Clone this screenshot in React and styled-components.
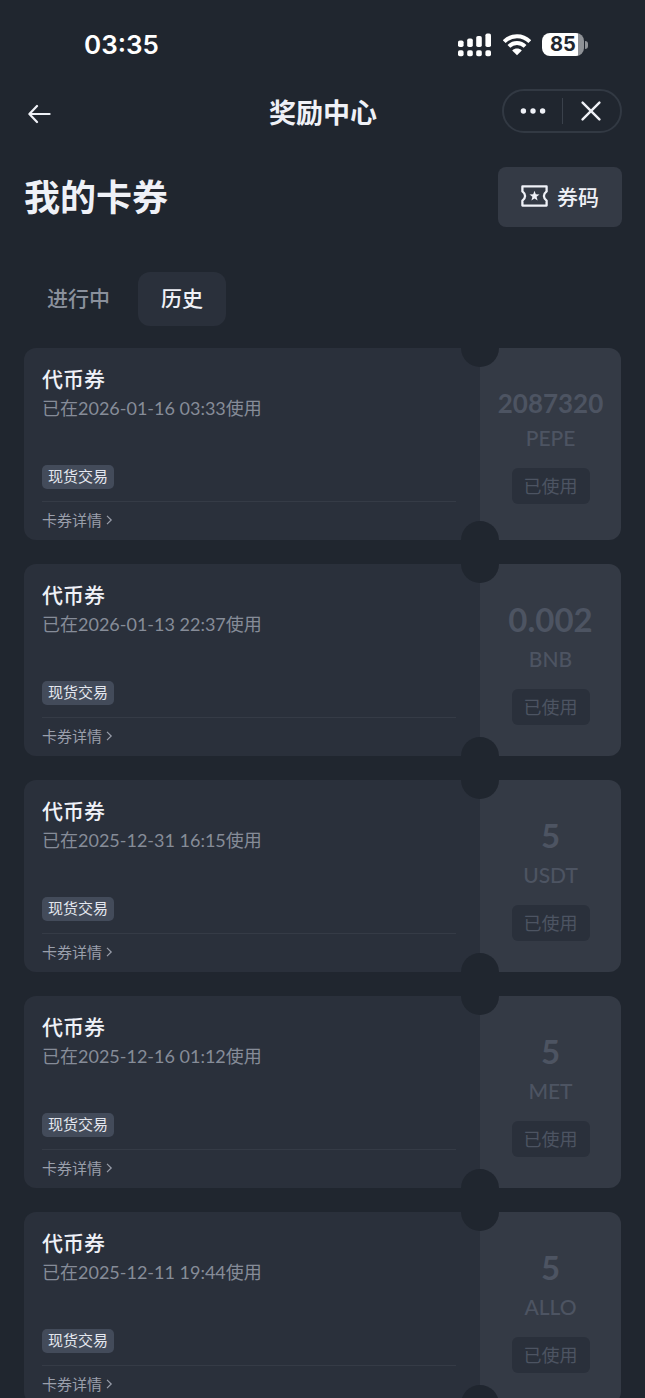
import React, { useState } from 'react';
import styled, { createGlobalStyle } from 'styled-components';

const GlobalStyle = createGlobalStyle`
  * {
    box-sizing: border-box;
  }
  body {
    margin: 0;
    background: #20262f;
    color: #eff1f7;
    font-family: Lato, "Noto Sans CJK SC", sans-serif;
  }
  button {
    border: 0;
    padding: 0;
    background: none;
    color: inherit;
    font: inherit;
    cursor: pointer;
  }
  svg {
    display: block;
  }
`

const Screen = styled.div`
  display: flex;
  flex-direction: column;
  height: 100vh;
  overflow: hidden;
`;

const StatusBar = styled.div`
  display: flex;
  flex: none;
  align-items: center;
  justify-content: space-between;
  height: 89px;
  padding: 0 57px 0 84px;
  color: #fff;
  font-family: Inter, sans-serif;
`;

const Time = styled.time`
  font-size: 26px;
  font-weight: 600;
`;

const StatusIcons = styled.div`
  display: flex;
  align-items: center;
  gap: 11px;
`;

const Battery = styled.div`
  display: flex;
  align-items: center;
  gap: 1px;
`;

const BatteryLevel = styled.div`
  width: 42px;
  border-radius: 8px;
  background: linear-gradient(to right, #fff 85%, #8f9297 85%);
  color: #20262f;
  font-size: 20px;
  font-weight: 700;
  line-height: 23px;
  text-align: center;
`;

const BatteryTip = styled.div`
  width: 3px;
  height: 8px;
  border-radius: 0 4px 4px 0;
  background: #8f9297;
`;

const NavBar = styled.header`
  display: grid;
  flex: none;
  grid-template-columns: 1fr auto 1fr;
  align-items: start;
  padding: 0 23px 0 24px;
`;

const BackButton = styled.button`
  justify-self: start;
  padding: 15px 4px 9px;
`;

const NavTitle = styled.h1`
  margin: 0;
  font-size: 27px;
  font-weight: 700;
  line-height: 48px;
`;

const Capsule = styled.div`
  display: flex;
  justify-self: end;
  align-items: center;
  width: 120px;
  height: 44px;
  border: 2px solid #323943;
  border-radius: 22px;
`;

const CapsuleButton = styled.button`
  display: flex;
  flex: 1;
  align-items: center;
  justify-content: center;
  height: 26px;

  & + & {
    border-left: 1px solid #3a414b;
  }
`;

const Heading = styled.div`
  display: flex;
  flex: none;
  align-items: center;
  justify-content: space-between;
  padding: 30px 23px 0 24px;
`;

const PageTitle = styled.h2`
  margin: 0;
  font-size: 36px;
  font-weight: 700;
  line-height: 58px;
`;

const CodeButton = styled.button`
  display: flex;
  align-items: center;
  gap: 9px;
  height: 60px;
  padding: 0 23px 2px;
  border-radius: 8px;
  background: #343a45;
  font-size: 21px;
  font-weight: 500;
`;

const Tabs = styled.div`
  display: flex;
  flex: none;
  gap: 5px;
  padding: 45px 24px 22px;
`;

const Tab = styled.button`
  height: 54px;
  padding: 0 23px 4px;
  border-radius: 12px;
  background: ${props => props.$active ? '#2a303b' : 'transparent'};
  color: ${props => props.$active ? '#eff1f7' : '#8a909c'};
  font-size: 21px;
  font-weight: 500;
`;

const CouponList = styled.ul`
  display: flex;
  flex: 1;
  flex-direction: column;
  gap: 24px;
  min-height: 0;
  margin: 0;
  padding: 0 24px;
  overflow-y: auto;
  list-style: none;
  scrollbar-width: none;
`;

const Card = styled.li`
  position: relative;
  display: flex;
  flex: none;
  min-height: 192px;

  /* round notches on the tear line */
  &::before,
  &::after {
    content: '';
    position: absolute;
    right: 122px;
    width: 38px;
    height: 19px;
    background: #20262f;
  }
  &::before {
    top: 0;
    border-radius: 0 0 19px 19px;
  }
  &::after {
    bottom: 0;
    border-radius: 19px 19px 0 0;
  }
`;

const CardBody = styled.div`
  display: flex;
  flex: 1;
  flex-direction: column;
  align-items: flex-start;
  padding: 16px 24px 0 18px;
  border-radius: 12px 0 0 12px;
  background: #2a303b;
`;

const CardTitle = styled.h3`
  margin: 0;
  font-size: 21px;
  font-weight: 500;
  line-height: 30px;
`;

const CardDate = styled.p`
  margin: 0;
  color: #868c98;
  font-size: 18px;
  line-height: 28px;
`;

const Tag = styled.span`
  margin-top: auto;
  padding: 0 6px 2px;
  border-radius: 5px;
  background: #434b5a;
  color: #e4e7ee;
  font-size: 15px;
  line-height: 22px;
`;

const CardFooter = styled.div`
  align-self: stretch;
  margin-top: 12px;
  padding-bottom: 2px;
  border-top: 1px solid #353b46;
`;

const DetailLink = styled.a`
  display: flex;
  align-items: center;
  gap: 4px;
  width: fit-content;
  color: #9a9fab;
  font-size: 15px;
  line-height: 36px;
  text-decoration: none;
`;

const CardSide = styled.div`
  display: flex;
  flex: none;
  flex-direction: column;
  align-items: center;
  justify-content: center;
  width: 141px;
  border-radius: 0 12px 12px 0;
  background: #343a45;
  color: #4d5462;
`;

const Amount = styled.strong`
  font-size: ${props => props.$long ? '26px' : '33px'};
  font-weight: 700;
  line-height: ${props => props.$long ? '38px' : '48px'};
`;

const Token = styled.span`
  font-size: 21px;
  font-weight: 500;
  line-height: 32px;
`;

const Used = styled.span`
  margin-top: 14px;
  padding: 0 12px;
  border-radius: 6px;
  background: #2a303b;
  font-size: 18px;
  line-height: 36px;
`;

const SignalIcon = () => (
  <svg width="34" height="24" viewBox="0 0 34 24" fill="#fff">
    <rect x="0" y="7.5" width="5.6" height="6.5" rx="1.8" />
    <rect x="9.2" y="5.5" width="5.6" height="8.5" rx="1.8" />
    <rect x="18.2" y="3" width="5.6" height="11" rx="1.8" />
    <rect x="27.4" y="0.5" width="5.6" height="13.5" rx="1.8" />
    <rect x="0" y="17.2" width="5.6" height="6" rx="1.8" />
    <rect x="9.2" y="17.2" width="5.6" height="6" rx="1.8" />
    <rect x="18.2" y="17.2" width="5.6" height="6" rx="1.8" />
    <rect x="27.4" y="17.2" width="5.6" height="6" rx="1.8" />
  </svg>
);

const WifiIcon = () => (
  <svg width="28" height="22" viewBox="0 0 28 22" fill="none" stroke="#fff" strokeWidth="4">
    <path d="M1.2 7.6C8.4 .4 19.6 .4 26.8 7.6" />
    <path d="M5.9 12.4C10.5 8 17.5 8 22.1 12.4" />
    <path d="M14 21.3L9.2 16.5C12 13.9 16 13.9 18.8 16.5Z" fill="#fff" stroke="none" />
  </svg>
);

const BackIcon = () => (
  <svg width="24" height="20" viewBox="0 0 24 20" fill="none" stroke="currentColor" strokeWidth="2.2" strokeLinecap="round" strokeLinejoin="round">
    <path d="M9 2L1.4 10L9 18M1.8 10H21.6" />
  </svg>
);

const MoreIcon = () => (
  <svg width="26" height="8" viewBox="0 0 26 8" fill="currentColor">
    <circle cx="3.4" cy="4" r="2.7" />
    <circle cx="13" cy="4" r="2.7" />
    <circle cx="22.6" cy="4" r="2.7" />
  </svg>
);

const CloseIcon = () => (
  <svg width="20" height="20" viewBox="0 0 20 20" fill="none" stroke="currentColor" strokeWidth="2.4" strokeLinecap="round">
    <path d="M1.6 1.6L18.4 18.4M18.4 1.6L1.6 18.4" />
  </svg>
);

const TicketIcon = () => (
  <svg width="27" height="22" viewBox="0 0 27 22" fill="none" stroke="currentColor" strokeWidth="2.3" strokeLinejoin="round">
    <path d="M1.4 1.4H25.6V6.4C23.8 7.8 22.9 9.3 22.9 11S23.8 14.2 25.6 15.6V20.6H1.4V15.6C3.2 14.2 4.1 12.7 4.1 11S3.2 7.8 1.4 6.4Z" />
    <path
      d="M13.5 5.8L14.8 9.3L18.5 9.5L15.6 11.8L16.6 15.4L13.5 13.4L10.4 15.4L11.4 11.8L8.5 9.5L12.2 9.3Z"
      fill="currentColor"
      stroke="none"
    />
  </svg>
);

const ChevronIcon = () => (
  <svg width="7" height="12" viewBox="0 0 7 12" fill="none" stroke="currentColor" strokeWidth="1.2">
    <path d="M1 1.8L5.2 6L1 10.2" />
  </svg>
);

const coupons = [
  { date: '2026-01-16 03:33', amount: '2087320', token: 'PEPE' },
  { date: '2026-01-13 22:37', amount: '0.002', token: 'BNB' },
  { date: '2025-12-31 16:15', amount: '5', token: 'USDT' },
  { date: '2025-12-16 01:12', amount: '5', token: 'MET' },
  { date: '2025-12-11 19:44', amount: '5', token: 'ALLO' },
];

const Coupon = ({ date, amount, token }) => (
  <Card>
    <CardBody>
      <CardTitle>代币券</CardTitle>
      <CardDate>已在{date}使用</CardDate>
      <Tag>现货交易</Tag>
      <CardFooter>
        <DetailLink href="#">卡券详情<ChevronIcon /></DetailLink>
      </CardFooter>
    </CardBody>
    <CardSide>
      <Amount $long={amount.length > 6}>{amount}</Amount>
      <Token>{token}</Token>
      <Used>已使用</Used>
    </CardSide>
  </Card>
);

const App = () => {
  const [tab, setTab] = useState('history');

  return (
    <Screen>
      <GlobalStyle />
      <StatusBar>
        <Time>03:35</Time>
        <StatusIcons>
          <SignalIcon />
          <WifiIcon />
          <Battery>
            <BatteryLevel>85</BatteryLevel>
            <BatteryTip />
          </Battery>
        </StatusIcons>
      </StatusBar>
      <NavBar>
        <BackButton aria-label="返回"><BackIcon /></BackButton>
        <NavTitle>奖励中心</NavTitle>
        <Capsule>
          <CapsuleButton aria-label="更多"><MoreIcon /></CapsuleButton>
          <CapsuleButton aria-label="关闭"><CloseIcon /></CapsuleButton>
        </Capsule>
      </NavBar>
      <Heading>
        <PageTitle>我的卡券</PageTitle>
        <CodeButton><TicketIcon />券码</CodeButton>
      </Heading>
      <Tabs>
        <Tab $active={tab === 'active'} onClick={() => setTab('active')}>进行中</Tab>
        <Tab $active={tab === 'history'} onClick={() => setTab('history')}>历史</Tab>
      </Tabs>
      <CouponList>
        {coupons.map(coupon => <Coupon key={coupon.date} {...coupon} />)}
      </CouponList>
    </Screen>
  );
};

export default App;
